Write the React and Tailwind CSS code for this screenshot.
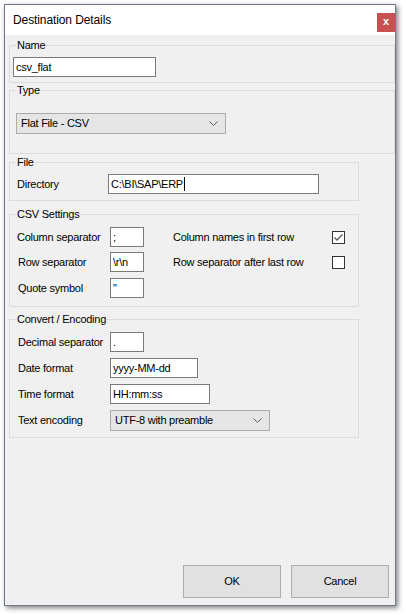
import React from "react";

function Group({ title, className, children }) {
  return (
    <fieldset className={className}>
      <legend className="ml-[6px] px-[1px] leading-[14px]">{title}</legend>
      {children}
    </fieldset>
  );
}

function Chevron() {
  return (
    <svg width="9" height="5" viewBox="0 0 9 5" className="shrink-0">
      <polyline points="0.5,0.5 4.5,4.5 8.5,0.5" fill="none" stroke="#606060" strokeWidth="1" />
    </svg>
  );
}

function CheckBox({ checked }) {
  return (
    <div className="w-[13px] h-[13px] border border-[#333333] bg-white flex items-center justify-center">
      {checked && (
        <svg width="11" height="11" viewBox="0 0 11 11">
          <polyline points="1.5,5.5 4,8 9.5,2.5" fill="none" stroke="#555555" strokeWidth="1.3" />
        </svg>
      )}
    </div>
  );
}

export default function App() {
  return (
    <div className="w-[406px] h-[615px] bg-white pt-[4px] pl-[4px] font-['Liberation_Sans',Arial,sans-serif] text-[11px] tracking-[-0.25px] text-black">
      <div className="w-[392px] h-[602px] border border-[#6f7b88] bg-[#f0f0f0] flex flex-col shadow-[2px_2px_5px_rgba(0,0,0,0.5)]">
        {/* Title bar */}
        <div className="h-[30px] bg-white flex items-start shrink-0">
          <div className="pl-[8px] pt-[8px] text-[12px] leading-[14px] tracking-[-0.1px]">Destination Details</div>
          <div className="ml-auto mt-[8px] w-[18px] h-[19px] bg-[#c75050] flex items-center justify-center text-white text-[11px] font-bold leading-none pb-[2px]">
            x
          </div>
        </div>

        {/* Name */}
        <Group title="Name" className="mt-[3px] ml-[4px] w-[386px] border border-[#dcdcdc]">
          <div className="mt-[5px] mb-[5px] ml-[3px] w-[143px] h-[20px] border border-[#7a7a7a] bg-white flex items-center pl-[2px]">
            csv_flat
          </div>
        </Group>

        {/* Type */}
        <Group title="Type" className="ml-[4px] w-[386px] border border-[#dcdcdc]">
          <div className="mt-[16px] mb-[19px] ml-[6px] w-[210px] h-[21px] border border-[#acacac] bg-[#e5e5e5] flex items-center pl-[4px] pr-[7px]">
            <span className="flex-1">Flat File - CSV</span>
            <Chevron />
          </div>
        </Group>

        {/* File */}
        <Group title="File" className="mt-[1px] ml-[4px] w-[350px] border border-[#dcdcdc]">
          <div className="mt-[5px] mb-[6px] pl-[7px] flex items-center">
            <span className="w-[91px]">Directory</span>
            <div className="w-[211px] h-[20px] border border-[#7a7a7a] bg-white flex items-center pl-[2px]">
              C:\BI\SAP\ERP
              <span className="ml-[1px] w-[1px] h-[14px] bg-black" />
            </div>
          </div>
        </Group>

        {/* CSV Settings */}
        <Group title="CSV Settings" className="mt-[6px] ml-[4px] w-[350px] border border-[#dcdcdc]">
          <div className="mt-[6px] mb-[8px] pl-[7px] flex flex-col">
            <div className="h-[20px] flex items-center">
              <span className="w-[93px]">Column separator</span>
              <div className="w-[34px] h-[20px] border border-[#7a7a7a] bg-white flex items-center pl-[2px]">;</div>
              <span className="ml-[29px] w-[159px]">Column names in first row</span>
              <CheckBox checked />
            </div>
            <div className="mt-[5px] h-[20px] flex items-center">
              <span className="w-[93px] pl-[1px]">Row separator</span>
              <div className="w-[34px] h-[20px] border border-[#7a7a7a] bg-white flex items-center pl-[2px]">\r\n</div>
              <span className="ml-[29px] w-[159px]">Row separator after last row</span>
              <CheckBox />
            </div>
            <div className="mt-[6px] h-[20px] flex items-center">
              <span className="w-[93px] pl-[1px]">Quote symbol</span>
              <div className="w-[34px] h-[20px] border border-[#7a7a7a] bg-white flex items-start pl-[2px] pt-[1px]">"</div>
            </div>
          </div>
        </Group>

        {/* Convert / Encoding */}
        <Group title="Convert / Encoding" className="mt-[5px] ml-[4px] w-[350px] border border-[#dcdcdc]">
          <div className="mt-[6px] mb-[6px] pl-[7px] flex flex-col">
            <div className="h-[20px] flex items-center">
              <span className="w-[93px] pl-[1px]">Decimal separator</span>
              <div className="w-[34px] h-[20px] border border-[#7a7a7a] bg-white flex items-center pl-[2px]">.</div>
            </div>
            <div className="mt-[6px] h-[20px] flex items-center">
              <span className="w-[93px] pl-[1px]">Date format</span>
              <div className="w-[88px] h-[20px] border border-[#7a7a7a] bg-white flex items-center pl-[2px]">yyyy-MM-dd</div>
            </div>
            <div className="mt-[6px] h-[20px] flex items-center">
              <span className="w-[93px] pl-[1px]">Time format</span>
              <div className="w-[100px] h-[20px] border border-[#7a7a7a] bg-white flex items-center pl-[2px]">HH:mm:ss</div>
            </div>
            <div className="mt-[6px] h-[21px] flex items-center">
              <span className="w-[93px] pl-[1px]">Text encoding</span>
              <div className="w-[160px] h-[21px] border border-[#acacac] bg-[#e5e5e5] flex items-center pl-[4px] pr-[7px]">
                <span className="flex-1">UTF-8 with preamble</span>
                <Chevron />
              </div>
            </div>
          </div>
        </Group>

        {/* Buttons */}
        <div className="mt-auto mb-[7px] mr-[6px] flex justify-end gap-[10px]">
          <button className="w-[98px] h-[33px] border border-[#adadad] bg-[#e1e1e1] text-[11px]">OK</button>
          <button className="w-[98px] h-[33px] border border-[#adadad] bg-[#e1e1e1] text-[11px]">Cancel</button>
        </div>
      </div>
    </div>
  );
}
